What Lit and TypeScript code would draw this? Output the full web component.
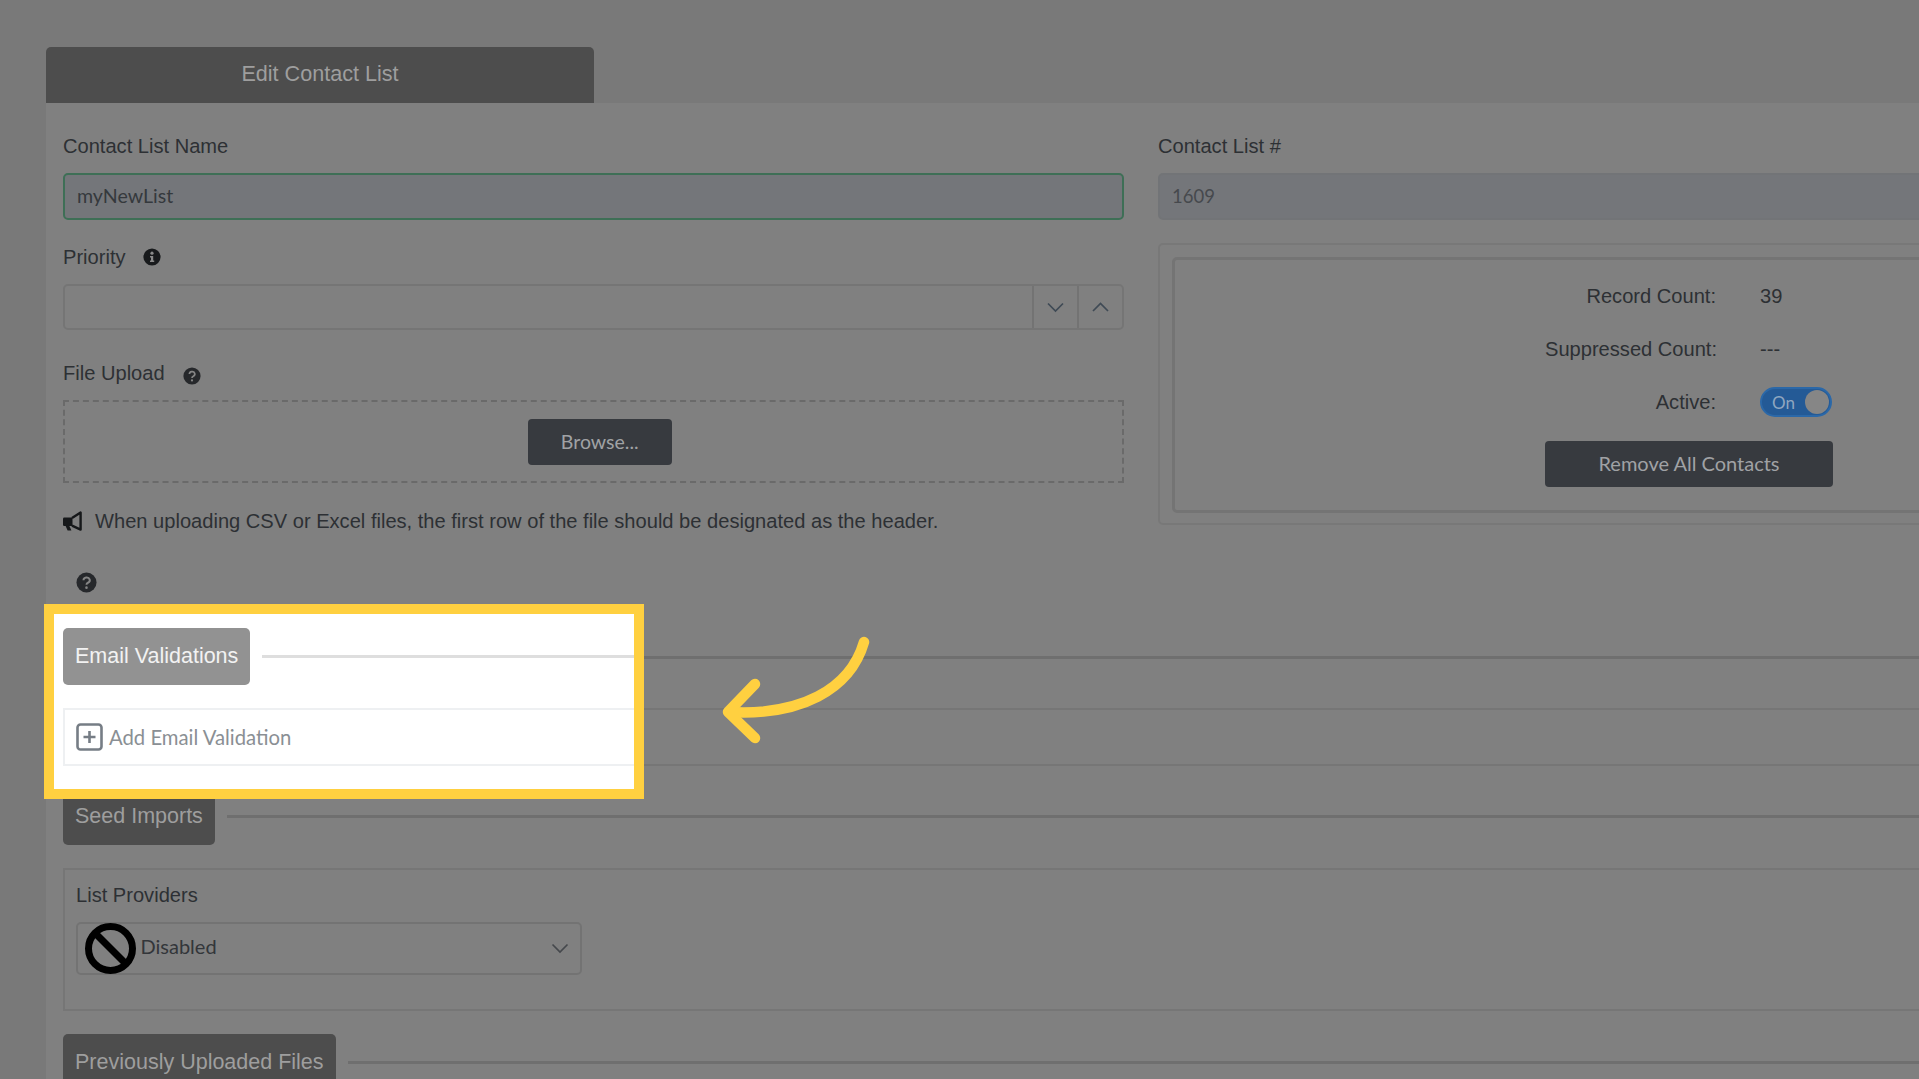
import { LitElement, html, css, svg } from "lit";
import { customElement } from "lit/decorators.js";

const chevronDown = svg`<polyline points="1,1.5 8.5,9 16,1.5" fill="none" stroke="currentColor" stroke-width="1.7"/>`;
const chevronUp = svg`<polyline points="1,9 8.5,1.5 16,9" fill="none" stroke="currentColor" stroke-width="1.7"/>`;

const infoIcon = html`<svg class="icon-sm" viewBox="0 0 18 18"><circle cx="9" cy="9" r="8.6" fill="#181a1c"/><circle cx="9" cy="5.2" r="1.6" fill="#8a8a8a"/><path d="M7 8h3.2v4.6h1v1.5H7v-1.5h1V9.5H7z" fill="#8a8a8a"/></svg>`;
const helpIcon = (cls: string) => html`<svg class=${cls} viewBox="0 0 18 18"><circle cx="9" cy="9" r="8.6" fill="#26282b"/><path d="M6.4 7a2.7 2.4 0 1 1 3.9 2.2c-.9.5-1.3.9-1.3 1.8" fill="none" stroke="#858585" stroke-width="1.7"/><circle cx="9" cy="13.4" r="1.1" fill="#858585"/></svg>`;

@customElement("app-root")
export class AppRoot extends LitElement {
  static styles = css`
    :host {
      display: block;
      position: relative;
      width: 1919px;
      height: 1079px;
      overflow: hidden;
      box-sizing: border-box;
      padding: 47px 0 0 46px;
      background: #797979;
      font-family: "Liberation Sans", Arial, sans-serif;
      font-size: 20.1px;
      color: #2d3034;
    }
    * { box-sizing: border-box; }

    .page-tab {
      width: 548px;
      height: 56px;
      padding-bottom: 2px;
      border-radius: 5px 5px 0 0;
      background: #4d4d4d;
      color: #9e9e9e;
      font-size: 21.6px;
      display: flex;
      align-items: center;
      justify-content: center;
    }
    .panel {
      width: 2190px;
      height: 1000px;
      background: #808080;
    }
    .cols {
      display: grid;
      grid-template-columns: 1095px 1095px;
    }
    .col { padding: 0 17px; }

    .label {
      display: flex;
      align-items: center;
      height: 24px;
      line-height: 24px;
      white-space: nowrap;
    }
    .input {
      height: 47px;
      margin-top: 15px;
      padding: 0 12px 2px;
      border: 2px solid #757575;
      border-radius: 5px;
      display: flex;
      align-items: center;
      font-family: Lato, sans-serif;
      background: #74767a;
    }
    .input.valid {
      border-color: #3e6f56;
      color: #35393d;
      font-size: 19.6px;
    }
    .input.readonly {
      border-color: #727477;
      color: #46494d;
      font-size: 18.5px;
    }

    .l1 { margin-top: 31px; }
    .l2 { margin-top: 25px; }
    .l3 { margin-top: 31px; }

    .icon-sm { width: 18px; height: 18px; margin-left: 17px; }
    .icon-help { width: 18px; height: 18px; margin: 6px 0 0 18px; }
    .icon-help-lg { display: block; width: 21px; height: 21px; margin: 39px 0 0 13px; }

    .spin {
      height: 46px;
      margin-top: 15px;
      border: 2px solid #757575;
      border-radius: 5px;
      display: flex;
      justify-content: flex-end;
    }
    .spin-btn {
      width: 45px;
      border-left: 2px solid #737373;
      display: flex;
      align-items: center;
      justify-content: center;
      color: #3f4a55;
    }
    .spin-btn svg { width: 17px; height: 11px; }

    .drop {
      height: 83px;
      margin-top: 15px;
      border: 2px dashed #6a6a6a;
      display: flex;
      align-items: center;
      justify-content: center;
      padding-left: 12.5px;
    }
    .btn {
      background: #373a3f;
      color: #a0a2a5;
      border-radius: 4px;
      font-family: Lato, sans-serif;
      font-size: 20px;
      display: flex;
      align-items: center;
      justify-content: center;
      height: 46px;
      padding-bottom: 1px;
    }
    .browse { width: 144px; font-size: 19.5px; }

    .note {
      display: flex;
      align-items: center;
      gap: 12px;
      height: 24px;
      margin-top: 26px;
      white-space: nowrap;
    }
    .note svg { width: 20px; height: 20px; flex: none; }

    .stats {
      height: 282px;
      margin-top: 23px;
      border: 2px solid #787878;
      border-radius: 5px;
      padding: 11.5px;
    }
    .stats-inner {
      height: 256px;
      border: 3px solid #747474;
      border-radius: 5px;
      padding: 10px 0 0 370.5px;
    }
    .stat {
      display: grid;
      grid-template-columns: 171px 1fr;
      column-gap: 44px;
      align-items: center;
      width: 288px;
      height: 53px;
    }
    .stat-name { text-align: right; white-space: nowrap; }
    .toggle {
      width: 72px;
      height: 30px;
      border-radius: 15px;
      background: #245a96;
      border: 2px solid #2b68a8;
      display: flex;
      align-items: center;
      justify-content: space-between;
      padding: 0 1px 0 10px;
      color: #8fa6c0;
      font-family: Lato, sans-serif;
      font-size: 17px;
    }
    .knob {
      width: 24px;
      height: 24px;
      border-radius: 50%;
      background: #868686;
    }
    .remove { width: 288px; margin-top: 12px; }

    .sections { padding: 0 17px; }
    .sec-head {
      display: flex;
      align-items: center;
      gap: 12px;
    }
    .sec-tab {
      height: 57px;
      padding: 0 12px;
      border-radius: 5px;
      background: #4d4d4d;
      color: #9e9e9e;
      font-size: 21.5px;
      display: flex;
      align-items: center;
      white-space: nowrap;
    }
    .sec-line {
      flex: 1;
      height: 3px;
      background: #6f6f6f;
    }
    .email { margin-top: 35.5px; }
    .add-row {
      height: 58px;
      margin-top: 22px;
      border: 2px solid #767676;
      display: flex;
      align-items: center;
      gap: 6px;
      padding-left: 11px;
      font-family: Lato, sans-serif;
      font-size: 20.3px;
      color: #5c5f62;
    }
    .add-row svg { width: 27px; height: 28px; color: #3c4044; }
    .seed { margin-top: 22px; }
    .provider-box {
      height: 143px;
      margin-top: 23px;
      border: 2px solid #767676;
      padding: 13.5px 0 0 11px;
    }
    .select {
      width: 505.5px;
      height: 53px;
      margin-top: 15px;
      border: 2px solid #737373;
      border-radius: 5px;
      display: flex;
      align-items: center;
      gap: 5px;
      padding: 0 8px 0 6.5px;
      font-family: Lato, sans-serif;
      font-size: 20px;
      color: #33363a;
    }
    .select .ban { width: 51px; height: 51px; flex: none; }
    .select .name { flex: 1; padding-bottom: 5px; }
    .select .chev { width: 18px; height: 11px; color: #45484c; margin-right: 3px; }
    .prev { margin-top: 23px; }

    .spot {
      position: absolute;
      left: 43.5px;
      top: 604px;
      width: 600.5px;
      height: 195px;
      border: 10px solid #ffd040;
      background: #fff;
      overflow: hidden;
      padding: 14px 0 0 9.5px;
    }
    .spot-inner { width: 800px; }
    .spot .sec-tab { background: #929292; color: #f2f2f2; }
    .spot .sec-line { background: #dedede; }
    .spot .add-row { border-color: #eef0f2; color: #8a8f94; margin-top: 22.5px; }
    .spot .add-row svg { color: #767d85; }

    .arrow {
      position: absolute;
      left: 720px;
      top: 634px;
      width: 152px;
      height: 112px;
    }
  `;

  private emailSection() {
    return html`
      <div class="sec-head">
        <div class="sec-tab">Email Validations</div>
        <div class="sec-line"></div>
      </div>
      <div class="add-row">
        <svg viewBox="0 0 27 28"><rect x="1.5" y="1.5" width="24" height="25" rx="3" fill="none" stroke="currentColor" stroke-width="2.6"/><path d="M13.5 8v12M7.5 14h12" fill="none" stroke="currentColor" stroke-width="2.6"/></svg>
        <span>Add Email Validation</span>
      </div>
    `;
  }

  render() {
    return html`
      <div class="page-tab">Edit Contact List</div>
      <div class="panel">
        <div class="cols">
          <div class="col">
            <div class="label l1">Contact List Name</div>
            <div class="input valid">myNewList</div>
            <div class="label l2">Priority ${infoIcon}</div>
            <div class="spin">
              <div class="spin-btn"><svg viewBox="0 0 17 11">${chevronDown}</svg></div>
              <div class="spin-btn"><svg viewBox="0 0 17 11">${chevronUp}</svg></div>
            </div>
            <div class="label l3">File Upload ${helpIcon("icon-help")}</div>
            <div class="drop"><div class="btn browse">Browse...</div></div>
            <div class="note">
              <svg viewBox="0 0 20 20">
                <path d="M1.2 6.5H9.5V15H1.2Q0 15 0 13.8V7.7Q0 6.5 1.2 6.5Z" fill="#16181a"/>
                <path d="M2.6 15H6.4L8.4 19.6H4.6Z" fill="#16181a"/>
                <path d="M9 7L17.6 1.6V18.6L9 14.6" fill="none" stroke="#16181a" stroke-width="2.4" stroke-linejoin="round"/>
              </svg>
              <span>When uploading CSV or Excel files, the first row of the file should be designated as the header.</span>
            </div>
            ${helpIcon("icon-help-lg")}
          </div>
          <div class="col">
            <div class="label l1">Contact List #</div>
            <div class="input readonly">1609</div>
            <div class="stats">
              <div class="stats-inner">
                <div class="stat"><span class="stat-name">Record Count:</span><span>39</span></div>
                <div class="stat"><span class="stat-name">Suppressed Count:</span><span>---</span></div>
                <div class="stat"><span class="stat-name">Active:</span><div class="toggle"><span>On</span><span class="knob"></span></div></div>
                <div class="btn remove">Remove All Contacts</div>
              </div>
            </div>
          </div>
        </div>
        <div class="sections">
          <div class="email">${this.emailSection()}</div>
          <div class="sec-head seed">
            <div class="sec-tab">Seed Imports</div>
            <div class="sec-line"></div>
          </div>
          <div class="provider-box">
            <div class="label">List Providers</div>
            <div class="select">
              <svg class="ban" viewBox="0 0 51 51"><circle cx="25.5" cy="25.5" r="22" fill="none" stroke="#000" stroke-width="7"/><line x1="10" y1="10" x2="41" y2="41" stroke="#000" stroke-width="7"/></svg>
              <span class="name">Disabled</span>
              <svg class="chev" viewBox="0 0 17 11">${chevronDown}</svg>
            </div>
          </div>
          <div class="sec-head prev">
            <div class="sec-tab">Previously Uploaded Files</div>
            <div class="sec-line"></div>
          </div>
        </div>
      </div>

      <div class="spot"><div class="spot-inner">${this.emailSection()}</div></div>

      <svg class="arrow" viewBox="0 0 152 112">
        <g fill="none" stroke="#ffd040" stroke-width="10.5" stroke-linecap="round" stroke-linejoin="round">
          <path d="M144 8C130 56 80 82 9 78"/>
          <path d="M35 50L8 78L35 104"/>
        </g>
      </svg>
    `;
  }
}
